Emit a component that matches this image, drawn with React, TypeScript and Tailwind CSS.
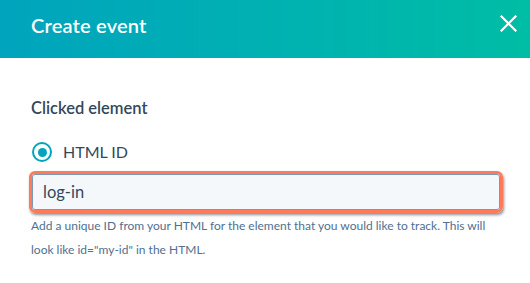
import React from "react";

export default function App() {
  return (
    <div className="w-[530px] h-[283px] bg-white overflow-hidden" style={{ fontFamily: "Lato, 'Liberation Sans', sans-serif" }}>
      <div className="h-[58px] bg-gradient-to-r from-[#00a4bd] to-[#00bda5] flex items-start justify-between pl-[31px] pr-[13px]">
        <div className="text-white text-[20px] leading-[28px] font-semibold mt-[11px] tracking-[0.2px]">Create event</div>
        <button className="mt-[15px] w-[17px] h-[17px] text-white">
          <svg viewBox="0 0 17 17" width="17" height="17" fill="none" stroke="white" strokeWidth="2.2" strokeLinecap="square">
            <path d="M1.5 1.5 L15.5 15.5 M15.5 1.5 L1.5 15.5" />
          </svg>
        </button>
      </div>
      <div className="pl-[31px] pr-[27px]">
        <div className="mt-[40px] text-[16.5px] leading-[20px] font-semibold text-[#33475b]">Clicked element</div>
        <div className="mt-[24px] flex items-center h-[20px]">
          <div className="w-[20px] h-[20px] rounded-full border-2 border-[#00a4bd] flex items-center justify-center ml-[1px]">
            <div className="w-[9px] h-[9px] rounded-full bg-[#00a4bd]" />
          </div>
          <span className="ml-[11px] text-[16px] text-[#33475b]">HTML ID</span>
        </div>
        <div className="mt-[9px] ml-[-2px] w-[474px] h-[42px] rounded-[6px] border-[3px] border-[#ff7a59] shadow-[1px_2px_3px_rgba(60,70,80,0.6)]">
          <div className="w-full h-full rounded-[3px] border border-[#7c98b6] bg-[#f5f8fa] flex items-center pl-[10px] text-[16.5px] text-[#33475b]">
            log-in
          </div>
        </div>
        <p className="mt-[1px] text-[12px] leading-[24px] text-[#516f90]">
          Add a unique ID from your HTML for the element that you would like to track. This will look like id="my-id" in the HTML.
        </p>
      </div>
    </div>
  );
}
